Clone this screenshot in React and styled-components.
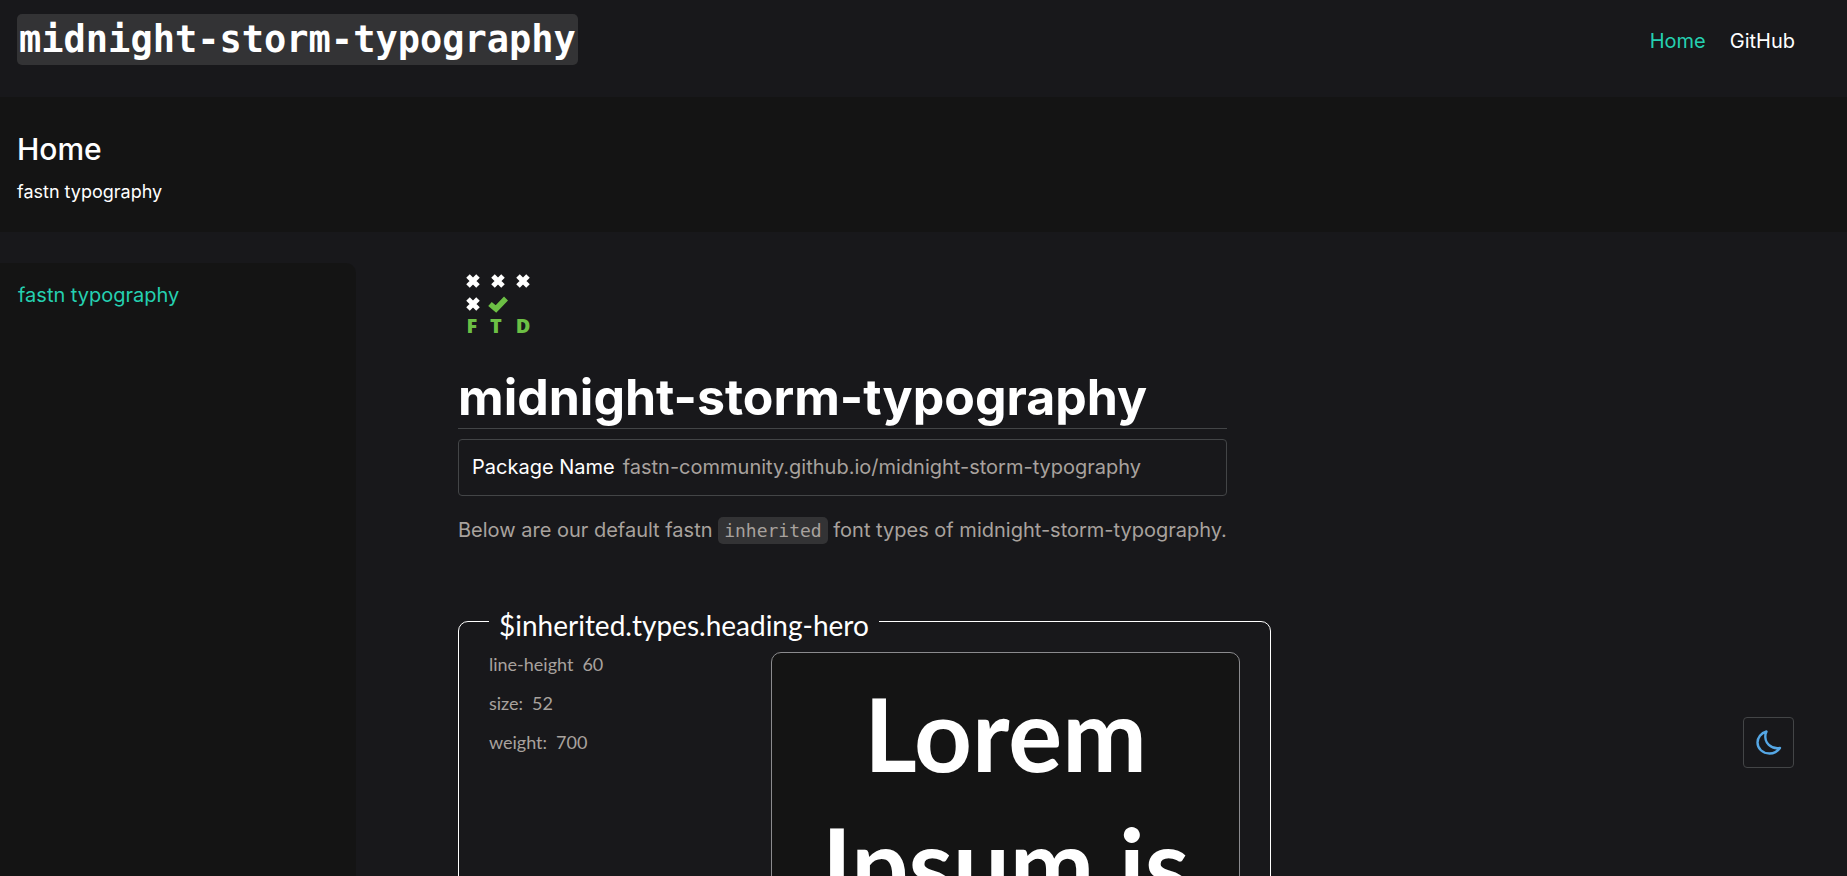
import React from "react";
import styled, { createGlobalStyle } from "styled-components";

const color = {
  base: "#18181b",
  step: "#141414",
  code: "#333335",
  border: "#434547",
  muted: "#a8a29e",
  strong: "#ffffff",
  accent: "#25d0b1",
};

const GlobalStyle = createGlobalStyle`
  * { box-sizing: border-box; }
  body { margin: 0; background: ${color.base}; }
  h1, h2, p, dl, dd { margin: 0; }
`;

const Page = styled.div`
  display: flex;
  flex-direction: column;
  height: 100vh;
  overflow: hidden;
  background: ${color.base};
  color: ${color.muted};
  font-family: Inter, "Liberation Sans", sans-serif;
  font-size: 20px;
  line-height: 32px;
`;

const Header = styled.header`
  display: flex;
  flex: none;
  align-items: flex-start;
  justify-content: space-between;
  padding: 14px 52px 32px 17px;
`;

const Code = styled.code`
  font-family: "DejaVu Sans Mono", monospace;
  background: ${color.code};
  border-radius: 5px;
`;

const SiteTitle = styled(Code)`
  padding: 1px 2px 0;
  color: ${color.strong};
  font-size: 37px;
  font-weight: 700;
  line-height: 50px;
`;

const Nav = styled.nav`
  display: flex;
  gap: 24px;
  padding-top: 11px;
`;

const NavLink = styled.a`
  color: ${(p) => (p.$active ? color.accent : color.strong)};
  text-decoration: none;
`;

const Banner = styled.section`
  flex: none;
  padding: 32px 17px 24px;
  background: ${color.step};
  color: ${color.strong};
`;

const BannerTitle = styled.h2`
  font-size: 30px;
  font-weight: 500;
  line-height: 40px;
`;

const BannerText = styled.p`
  padding-top: 7px;
  font-size: 18px;
`;

const Body = styled.div`
  display: flex;
  flex: 1;
  min-height: 0;
  gap: 102px;
  padding-top: 31px;
`;

const Sidebar = styled.aside`
  flex: none;
  width: 356px;
  padding: 16px 18px;
  background: ${color.step};
  border-top-right-radius: 10px;
`;

const Main = styled.main`
  flex: 0 1 813px;
  padding-top: 3px;
`;

const Intro = styled.div`
  display: flex;
  flex-direction: column;
  width: fit-content;
  max-width: 100%;
`;

const Title = styled.h1`
  margin-top: 20px;
  border-bottom: 1px solid ${color.border};
  color: ${color.strong};
  font-size: 50px;
  font-weight: 700;
  line-height: 62px;
`;

const PackageBox = styled.div`
  display: flex;
  gap: 8px;
  margin-top: 10px;
  padding: 11px 13px 12px;
  border: 1px solid ${color.border};
  border-radius: 4px;
`;

const PackageLabel = styled.span`
  color: ${color.strong};
`;

const Note = styled.p`
  margin-top: 18px;
`;

const InlineCode = styled(Code)`
  padding: 3px 6px;
  font-size: 18px;
`;

const Sample = styled.fieldset`
  display: flex;
  justify-content: space-between;
  min-width: 0;
  height: 500px;
  margin: 50px 0 0;
  padding: 0 30px;
  border: 1px solid ${color.strong};
  border-radius: 10px;
  font-family: Lato, sans-serif;
`;

const SampleName = styled.legend`
  padding: 8px 10px 0;
  color: ${color.strong};
  font-size: 28px;
  line-height: 40px;
`;

const Specs = styled.dl`
  font-size: 18px;
  line-height: 39px;
`;

const Spec = styled.div`
  display: flex;
  gap: 9px;
`;

const Preview = styled.p`
  width: 469px;
  height: 420px;
  margin-top: 7px;
  padding: 15px;
  background: ${color.step};
  border: 1px solid #8b8b8e;
  border-radius: 10px;
  color: ${color.strong};
  font-size: 101px;
  font-weight: 700;
  line-height: 130px;
  text-align: center;
`;

const ModeButton = styled.button`
  position: fixed;
  right: 53px;
  bottom: 108px;
  display: grid;
  place-items: center;
  width: 51px;
  height: 51px;
  padding: 0;
  background: ${color.base};
  border: 1px solid ${color.border};
  border-radius: 4px;
`;

const Cross = ({ x, y }) => (
  <path
    d={`M${x - 5} ${y - 5}L${x + 5} ${y + 5}M${x + 5} ${y - 5}L${x - 5} ${y + 5}`}
    stroke="#fff"
    strokeWidth="5"
  />
);

const Logo = () => (
  <svg width="80" height="80" viewBox="0 0 80 80" role="img" aria-label="FTD">
    <Cross x={15} y={15} />
    <Cross x={40} y={15} />
    <Cross x={65} y={15} />
    <Cross x={15} y={38} />
    <path d="M32 38L38 43L48 32.500" fill="none" stroke="#6cbf45" strokeWidth="5.500" />
    <g fill="#6cbf45" fontFamily="Open Sans" fontWeight="800" fontSize="20" textAnchor="middle">
      <text x="14" y="67">F</text>
      <text x="38" y="67">T</text>
      <text x="65" y="67">D</text>
    </g>
  </svg>
);

const specs = [
  ["line-height", "60"],
  ["size:", "52"],
  ["weight:", "700"],
];

export default function App() {
  return (
    <Page>
      <GlobalStyle />
      <Header>
        <SiteTitle>midnight-storm-typography</SiteTitle>
        <Nav>
          <NavLink href="#home" $active>Home</NavLink>
          <NavLink href="#github">GitHub</NavLink>
        </Nav>
      </Header>
      <Banner>
        <BannerTitle>Home</BannerTitle>
        <BannerText>fastn typography</BannerText>
      </Banner>
      <Body>
        <Sidebar>
          <NavLink href="#typography" $active>fastn typography</NavLink>
        </Sidebar>
        <Main>
          <Intro>
            <Logo />
            <Title>midnight-storm-typography</Title>
            <PackageBox>
              <PackageLabel>Package Name</PackageLabel>
              <span>fastn-community.github.io/midnight-storm-typography</span>
            </PackageBox>
            <Note>
              Below are our default fastn <InlineCode>inherited</InlineCode> font types of
              midnight-storm-typography.
            </Note>
          </Intro>
          <Sample>
            <SampleName>$inherited.types.heading-hero</SampleName>
            <Specs>
              {specs.map(([name, value]) => (
                <Spec key={name}>
                  <dt>{name}</dt>
                  <dd>{value}</dd>
                </Spec>
              ))}
            </Specs>
            <Preview>Lorem Ipsum is</Preview>
          </Sample>
        </Main>
      </Body>
      <ModeButton type="button" aria-label="Switch colour mode">
        <svg width="26" height="26" viewBox="0 0 26 26" fill="none" stroke="#55a7e5" strokeWidth="2.400" strokeLinejoin="round">
          <path d="M10.500 1.500C5 3 1.500 7.500 1.500 12.500C1.500 18.500 6.500 23.500 13.500 23.500C18.500 23.500 21.500 21.500 24 18C15 19.500 8 13 9.500 4Z" />
        </svg>
      </ModeButton>
    </Page>
  );
}
